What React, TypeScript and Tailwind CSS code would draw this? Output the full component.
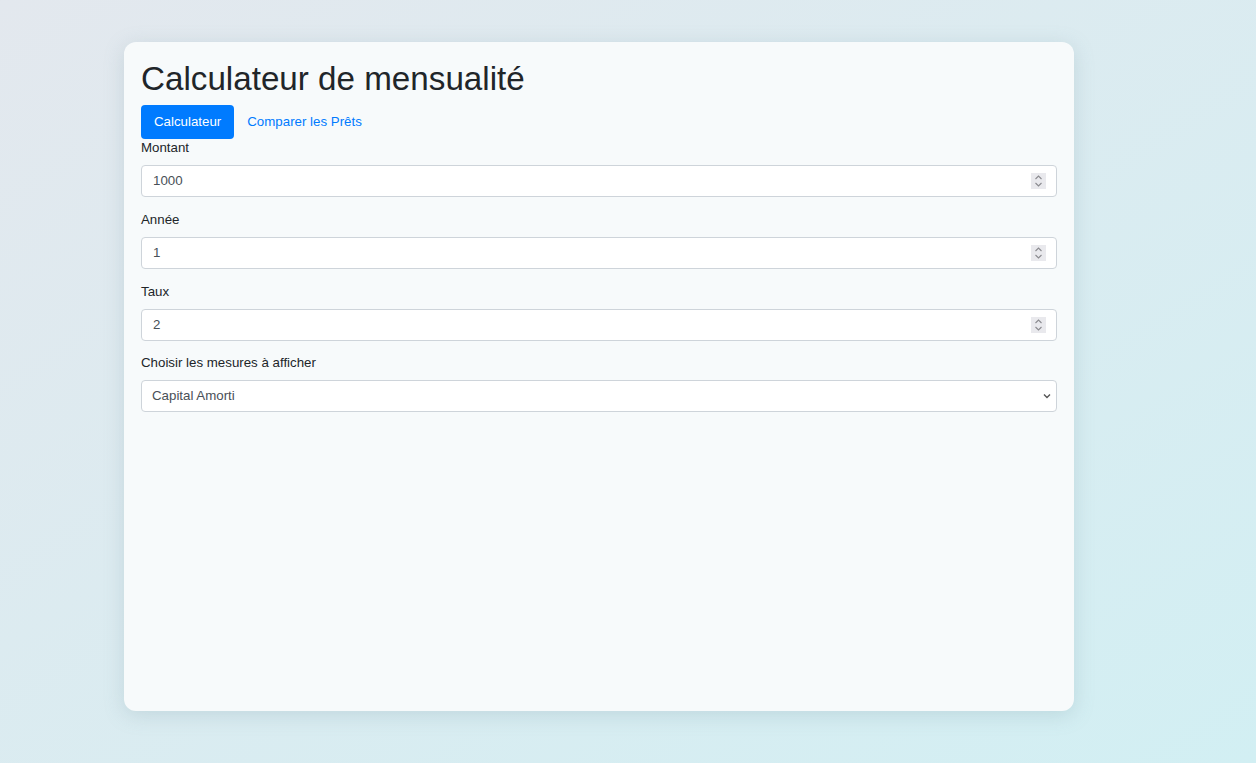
import React from "react";

function Spinner() {
  return (
    <div className="flex h-[16px] w-[15px] flex-col items-center justify-center bg-[#e9e9ed]">
      <svg width="9" height="14" viewBox="0 0 9 14" fill="none" stroke="#8a8a8f" strokeWidth="1.1">
        <path d="M1.5 5 L4.5 2 L7.5 5" />
        <path d="M1.5 9 L4.5 12 L7.5 9" />
      </svg>
    </div>
  );
}

function NumberField({ label, value, mb }: { label: string; value: string; mb: string }) {
  return (
    <div className={`flex flex-col ${mb}`}>
      <label className="mb-[8px] h-[18px] text-[13.3px] leading-[18px] text-[#212529]">{label}</label>
      <div className="flex h-[32px] items-center justify-between rounded-[4px] border border-[#ced4da] bg-white pl-[11px] pr-[10px]">
        <span className="text-[13.3px] text-[#495057]">{value}</span>
        <Spinner />
      </div>
    </div>
  );
}

export default function App() {
  return (
    <div
      className="h-[763px] w-full overflow-hidden bg-gradient-to-br from-[#e3e8ee] to-[#d2eff3] pt-[42px] pl-[124px]"
      style={{ fontFamily: '"Liberation Sans", Arial, sans-serif' }}
    >
      <div className="flex h-[669px] w-[950px] flex-col rounded-[12px] bg-[#f7fafb] px-[17px] pt-[17px] shadow-[0_4px_20px_rgba(120,150,165,0.25)]">
        <h1 className="mb-[6px] text-[33.2px] leading-[1.2] text-[#212529]">Calculateur de mensualité</h1>
        <div className="flex items-center">
          <button className="h-[34px] rounded-[4px] bg-[#007bff] px-[13px] text-[13.3px] text-white">Calculateur</button>
          <button className="h-[34px] px-[13px] text-[13.3px] text-[#007bff]">Comparer les Prêts</button>
        </div>
        <div className="flex flex-col">
          <NumberField label="Montant" value="1000" mb="mb-[14px]" />
          <NumberField label="Année" value="1" mb="mb-[14px]" />
          <NumberField label="Taux" value="2" mb="mb-[13px]" />
          <div className="flex flex-col">
            <label className="mb-[8px] h-[18px] text-[13.3px] leading-[18px] text-[#212529]">Choisir les mesures à afficher</label>
            <div className="flex h-[32px] items-center justify-between rounded-[4px] border border-[#ced4da] bg-white pl-[10px] pr-[4px]">
              <span className="text-[13.3px] text-[#495057]">Capital Amorti</span>
              <svg width="10" height="8" viewBox="0 0 10 8" fill="none" stroke="#555" strokeWidth="1.4">
                <path d="M2 2.5 L5 5.5 L8 2.5" />
              </svg>
            </div>
          </div>
        </div>
      </div>
    </div>
  );
}
